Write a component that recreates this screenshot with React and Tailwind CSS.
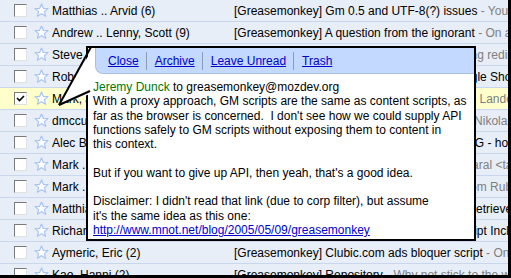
import React from "react";

const rows = [
  { from: "Matthias .. Arvid (6)", subject: "[Greasemonkey] Gm 0.5 and UTF-8(?) issues", snippet: " - You are right, the encoding is wrong" },
  { from: "Andrew .. Lenny, Scott (9)", subject: "[Greasemonkey] A question from the ignorant", snippet: " - On a related note" },
  { from: "Steve, Aaron (3)", subject: "[Greasemonkey] Location change", snippet: " - Then doing redirects in a script" },
  { from: "Rob, Jeremy (2)", subject: "[Greasemonkey] Userscripts for filtering Google Shopping", snippet: " - Thanks" },
  { from: "Mark, Jeremy (4)", subject: "[Greasemonkey] An idea", snippet: " - Sounds fine to me, Landon", checked: true },
  { from: "dmccunney (2)", subject: "[Greasemonkey] Problems", snippet: " - Hi there, thanks Nikolas" },
  { from: "Alec Burgess (3)", subject: "[Greasemonkey] Replacing inline text in a SVG - how to?", snippet: " - See" },
  { from: "Mark .. Jeremy (5)", subject: "[Greasemonkey] Scripts", snippet: " - On 5/9/05, Joe Amaral <tabs@gmail.com> wrote:" },
  { from: "Mark .. Aaron (3)", subject: "[Greasemonkey] Userscripts", snippet: " - Try calling it from Ruby" },
  { from: "Matthias, Jeremy (2)", subject: "[Greasemonkey] Using XMLHttpRequest to Retrieve Data", snippet: " - Hi" },
  { from: "Richard, Aaron (2)", subject: "[Greasemonkey] Loading of external JavaScript Includes", snippet: " - No" },
  { from: "Aymeric, Eric (2)", subject: "[Greasemonkey] Clubic.com ads bloquer script", snippet: " - On 5/9/05" },
  { from: "Kao, Hanni (2)", subject: "[Greasemonkey] Repository", snippet: " - Why not stick to the way" },
];

const lines = [
  "With a proxy approach, GM scripts are the same as content scripts, as",
  "far as the browser is concerned.  I don't see how we could supply API",
  "functions safely to GM scripts without exposing them to content in",
  "this context.",
  "",
  "But if you want to give up API, then yeah, that's a good idea.",
  "",
  "Disclaimer: I didn't read that link (due to corp filter), but assume",
  "it's the same idea as this one:",
];

function Star() {
  return (
    <svg width="15" height="15" viewBox="0 0 15 15">
      <path
        d="M7.5 1 L9.3 5.3 L14 5.6 L10.4 8.6 L11.6 13.3 L7.5 10.7 L3.4 13.3 L4.6 8.6 L1 5.6 L5.7 5.3 Z"
        fill="#ffffff"
        stroke="#a9c4ee"
        strokeWidth="1.2"
        strokeLinejoin="round"
      />
    </svg>
  );
}

function Checkbox({ checked }) {
  return (
    <div className="w-[13px] h-[13px] bg-white border border-t-[#7a7a7a] border-l-[#7a7a7a] border-r-[#e0e0e0] border-b-[#e0e0e0] flex items-center justify-center">
      {checked && (
        <svg width="9" height="9" viewBox="0 0 9 9">
          <path d="M1 4 L3.5 6.5 L8 2" fill="none" stroke="#000" strokeWidth="1.6" />
        </svg>
      )}
    </div>
  );
}

function Sep() {
  return <span className="w-px h-[18px] bg-[#8a9bb8] ml-[7px] mr-[8px]" />;
}

export default function App() {
  return (
    <div className="relative w-[511px] h-[278px] overflow-hidden bg-white border-r-[3px] border-b-[3px] border-black font-['Liberation_Sans',Arial,sans-serif] text-[12px] text-black">
      {/* Message list */}
      <div className="flex flex-col">
        {rows.map((row, i) => (
          <div
            key={i}
            className={`flex items-center h-[22px] border-b border-[#c9d7ee] shrink-0 ${row.checked ? "bg-[#ffffcc]" : "bg-[#e8eef7]"}`}
          >
            <div className="w-[34px] pl-[14px] flex items-center">
              <Checkbox checked={row.checked} />
            </div>
            <div className="w-[18px] flex items-center">
              <Star />
            </div>
            <div className="w-[182px] whitespace-nowrap overflow-hidden">{row.from}</div>
            <div className="flex-1 whitespace-nowrap overflow-hidden">
              {row.subject}
              <span className="text-[#7f7f7f]">{row.snippet}</span>
            </div>
          </div>
        ))}
      </div>

      {/* Popup */}
      <div className="absolute left-[86px] top-[46px] w-[390px] h-[195px] bg-white border-2 border-black">
        <svg className="absolute left-[-32px] top-[-2px]" width="38" height="62" viewBox="0 0 38 62">
          <polygon points="3,59 37,2 37,47" fill="#ffffff" />
          <line x1="3" y1="59" x2="35" y2="1" stroke="#000" strokeWidth="2" />
          <line x1="3" y1="59" x2="34" y2="45" stroke="#000" strokeWidth="2" />
        </svg>
        <div className="ml-[7px] h-[26px] bg-[#c3d9ff] border-l border-b border-[#a8bfe6] rounded-bl-[8px] flex items-center pl-[12px] text-[#0000cc]">
          <span className="underline">Close</span>
          <Sep />
          <span className="underline">Archive</span>
          <Sep />
          <span className="underline">Leave Unread</span>
          <Sep />
          <span className="underline">Trash</span>
        </div>
        <div className="pl-[5px] pt-[6px] leading-[14.3px] whitespace-pre">
          <div>
            <span className="text-[#007700]">Jeremy Dunck</span> to greasemonkey@mozdev.org
          </div>
          {lines.map((l, i) => (
            <div key={i} className="h-[14.3px]">{l}</div>
          ))}
          <div className="text-[#0000cc] underline">http://www.mnot.net/blog/2005/05/09/greasemonkey</div>
        </div>
      </div>
    </div>
  );
}
